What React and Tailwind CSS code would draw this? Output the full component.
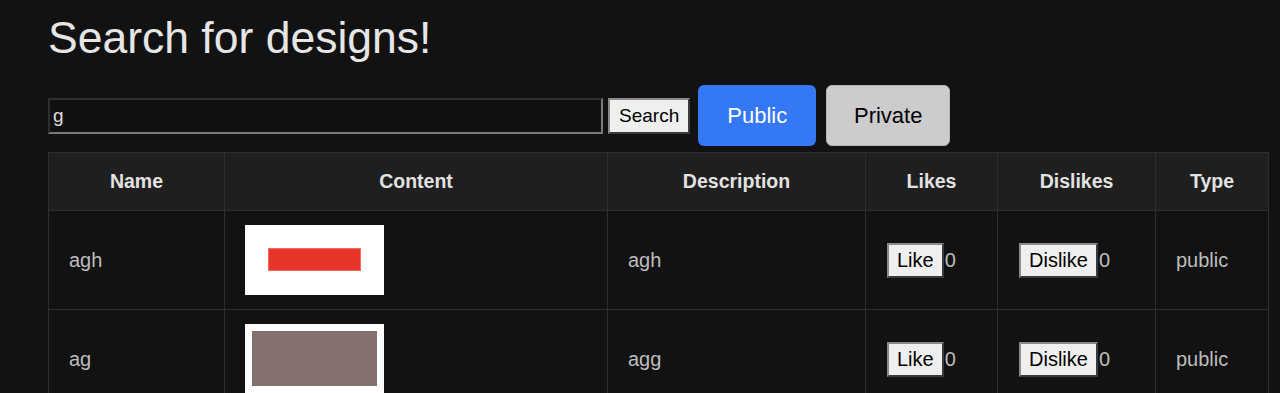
import React from "react";

const rows = [
  { name: "agh", desc: "agh", likes: 0, dislikes: 0, type: "public", kind: 1 },
  { name: "ag", desc: "agg", likes: 0, dislikes: 0, type: "public", kind: 2 },
];

function Thumb({ kind }) {
  return (
    <svg width="139" height="70" viewBox="0 0 139 70" className="block">
      <rect x="0" y="0" width="139" height="70" fill="#ffffff" />
      {kind === 1 ? (
        <rect x="23.5" y="23.5" width="92" height="22" fill="#e8352a" stroke="#f06a60" strokeWidth="1" />
      ) : (
        <rect x="7" y="7" width="125" height="55" fill="#857270" />
      )}
    </svg>
  );
}

function OldButton({ children, className = "" }) {
  return (
    <button
      className={
        "bg-[#efefef] text-black leading-[22px] border-2 border-t-[#8a8a8a] border-l-[#8a8a8a] border-b-[#3a3a3a] border-r-[#3a3a3a] " +
        className
      }
    >
      {children}
    </button>
  );
}

export default function App() {
  return (
    <div
      className="min-h-[393px] bg-[#121212] px-12 pt-[12px] text-[#e6e6e6]"
      style={{ fontFamily: '"Liberation Sans", Arial, sans-serif' }}
    >
      <h1 className="text-[44.5px] leading-[52px] font-normal text-[#e6e6e6]">Search for designs!</h1>

      <div className="mt-[21px] flex items-center h-[61px]">
        <input
          readOnly
          value="g"
          className="w-[555px] h-[36px] bg-[#111111] text-[#dedede] text-[19px] pl-[3px] border-2 border-t-[#2e2e2e] border-l-[#2e2e2e] border-b-[#7a7a7a] border-r-[#7a7a7a] outline-none"
          style={{ fontFamily: '"Liberation Sans", Arial, sans-serif' }}
        />
        <OldButton className="ml-[5px] h-[36px] px-[9px] text-[19px]">Search</OldButton>
        <button className="ml-[8px] h-[61px] w-[118px] rounded-[6px] bg-[#3478f6] text-white text-[22px]">
          Public
        </button>
        <button className="ml-[10px] h-[61px] w-[124px] rounded-[6px] bg-[#cccccc] text-black text-[22px] border border-[#b5b5b5]">
          Private
        </button>
      </div>

      <table className="mt-[6px] w-[1220px] table-fixed border-collapse text-[20px]">
        <colgroup>
          <col className="w-[176px]" />
          <col className="w-[383px]" />
          <col className="w-[258px]" />
          <col className="w-[132px]" />
          <col className="w-[158px]" />
          <col className="w-[113px]" />
        </colgroup>
        <thead>
          <tr className="bg-[#1f1f1f] h-[58px]">
            {["Name", "Content", "Description", "Likes", "Dislikes", "Type"].map((h) => (
              <th key={h} className="border border-[#2e2e2e] font-bold text-center text-[19.5px] text-[#e2e2e2] px-5">
                {h}
              </th>
            ))}
          </tr>
        </thead>
        <tbody>
          {rows.map((r) => (
            <tr key={r.name} className="h-[98px]">
              <td className="border border-[#2e2e2e] px-5 text-[#bdbdbd] align-middle">{r.name}</td>
              <td className="border border-[#2e2e2e] px-5 py-[14px] align-middle">
                <Thumb kind={r.kind} />
              </td>
              <td className="border border-[#2e2e2e] px-5 text-[#bdbdbd] align-middle">{r.desc}</td>
              <td className="border border-[#2e2e2e] px-5 align-middle">
                <div className="flex items-center pl-[1px]">
                  <OldButton className="h-[35px] px-[8px] text-[20px]">Like</OldButton>
                  <span className="ml-[1px] text-[#bdbdbd]">{r.likes}</span>
                </div>
              </td>
              <td className="border border-[#2e2e2e] px-5 align-middle">
                <div className="flex items-center pl-[1px]">
                  <OldButton className="h-[35px] px-[8px] text-[20px]">Dislike</OldButton>
                  <span className="ml-[1px] text-[#bdbdbd]">{r.dislikes}</span>
                </div>
              </td>
              <td className="border border-[#2e2e2e] px-5 text-[#bdbdbd] align-middle">{r.type}</td>
            </tr>
          ))}
        </tbody>
      </table>
    </div>
  );
}
